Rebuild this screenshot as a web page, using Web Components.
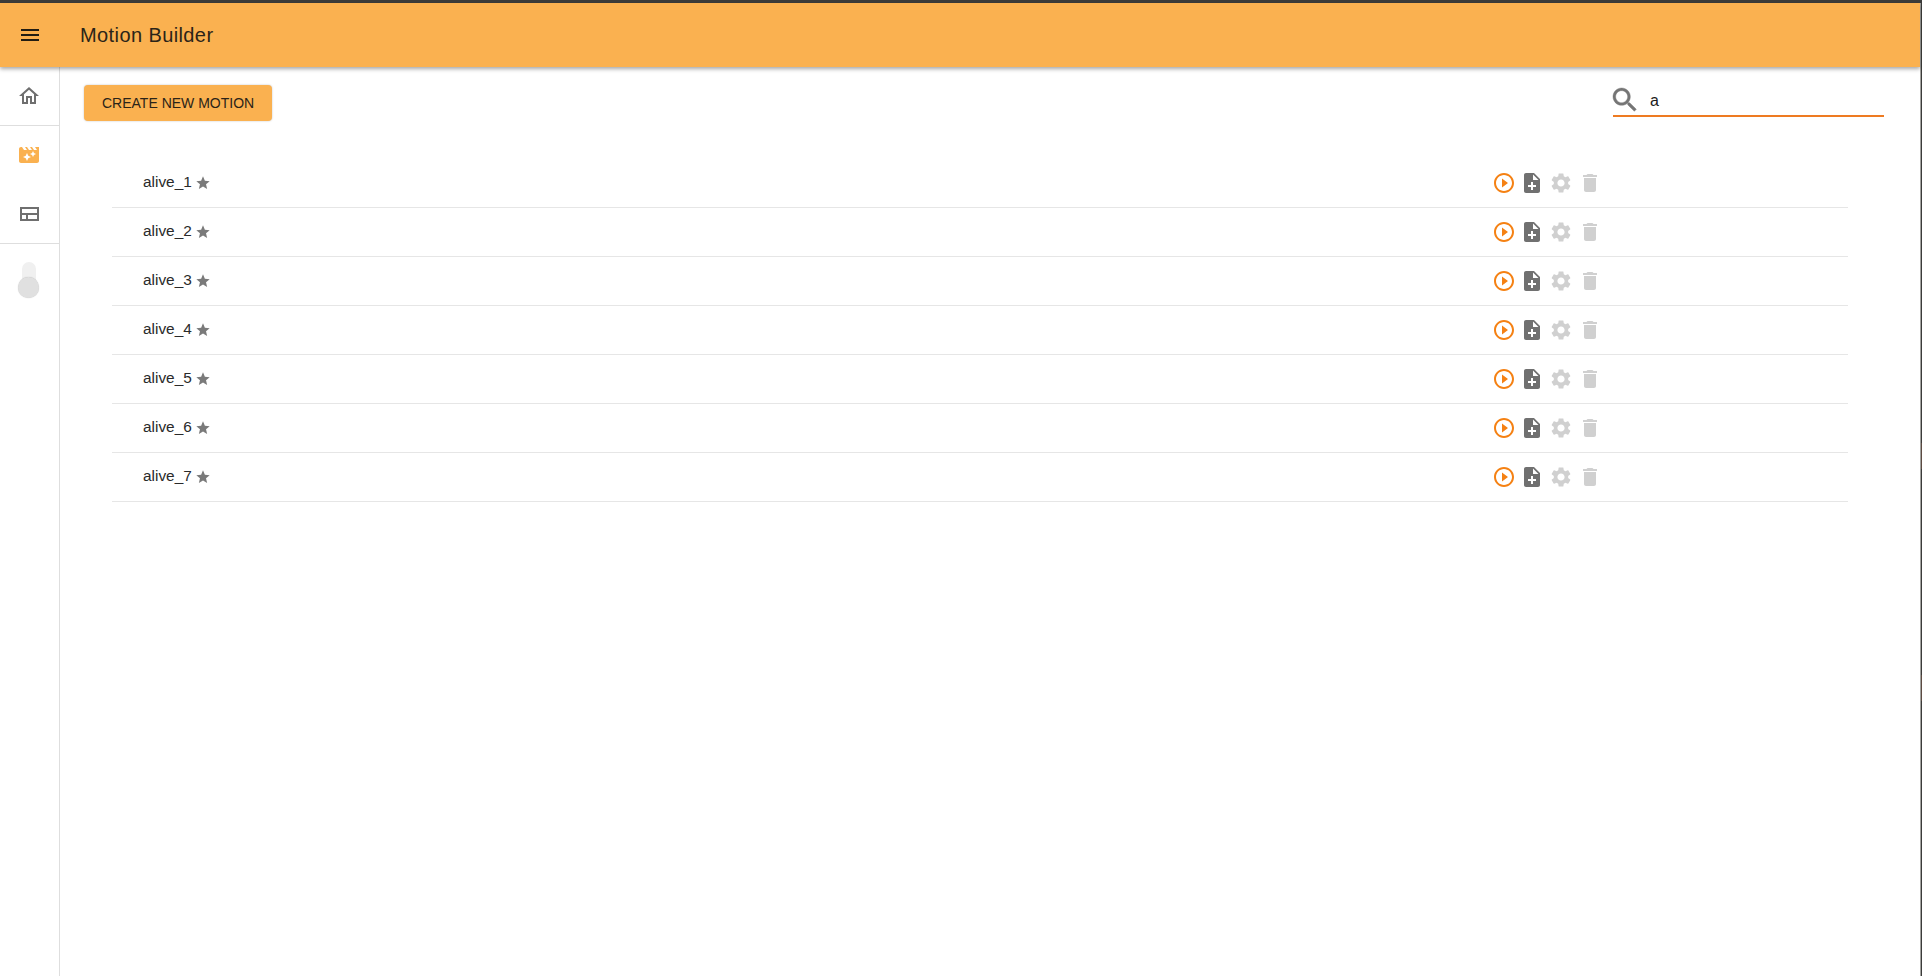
<!DOCTYPE html>
<html lang="en">
<head>
<meta charset="utf-8">
<title>Motion Builder</title>
<style>
  html, body { margin: 0; height: 100%; background: #fff; }
  body { font-family: "Liberation Sans", Arial, sans-serif; overflow: hidden; }
</style>
</head>
<body>
<app-shell>
  <top-bar slot="top" title="Motion Builder"></top-bar>
  <side-rail slot="rail"></side-rail>
  <motion-page>
    <motion-row name="alive_1"></motion-row>
    <motion-row name="alive_2"></motion-row>
    <motion-row name="alive_3"></motion-row>
    <motion-row name="alive_4"></motion-row>
    <motion-row name="alive_5"></motion-row>
    <motion-row name="alive_6"></motion-row>
    <motion-row name="alive_7"></motion-row>
  </motion-page>
</app-shell>

<script>
/** Material icon paths, all on a 24x24 grid. */
const icons = {
  menu: 'M3 18h18v-2H3v2zm0-5h18v-2H3v2zm0-7v2h18V6H3z',
  home: 'M12 5.69l5 4.5V18h-2v-6H9v6H7v-7.81l5-4.5M12 3L2 12h3v8h6v-6h2v6h6v-8h3L12 3z',
  clapper: 'M18 4l2 3h-3l-2-3h-2l2 3h-3l-2-3H8l2 3H7L5 4H4c-1.1 0-1.99.9-1.99 2L2 18c0 1.1.9 2 2 2h16c1.1 0 2-.9 2-2V4h-4zm-6.75 11.25L10 18l-1.25-2.75L6 14l2.75-1.25L10 10l1.25 2.75L14 14l-2.75 1.25zm5.69-3.31L16 14l-.94-2.06L13 11l2.06-.94L16 8l.94 2.06L19 11l-2.06.94z',
  layout: 'M3 6h19v14H3zM5 8v4h15V8zM5 14v4h4v-4zM11 14v4h9v-4z',
  search: 'M15.5 14h-.79l-.28-.27C15.41 12.59 16 11.11 16 9.5 16 5.91 13.09 3 9.5 3S3 5.91 3 9.5 5.91 16 9.5 16c1.61 0 3.09-.59 4.23-1.57l.27.28v.79l5 4.99L20.49 19l-4.99-5zm-6 0C7.01 14 5 11.99 5 9.5S7.01 5 9.5 5 14 7.01 14 9.5 11.99 14 9.5 14z',
  star: 'M12 17.27L18.18 21l-1.64-7.03L22 9.24l-7.19-.61L12 2 9.19 8.63 2 9.24l5.46 4.73L5.82 21z',
  play: 'M10 16.5l6-4.5-6-4.5v9zM12 2C6.48 2 2 6.48 2 12s4.48 10 10 10 10-4.48 10-10S17.52 2 12 2zm0 18c-4.41 0-8-3.59-8-8s3.59-8 8-8 8 3.59 8 8-3.59 8-8 8z',
  noteAdd: 'M14 2H6c-1.1 0-1.99.9-1.99 2L4 20c0 1.1.89 2 1.99 2H18c1.1 0 2-.9 2-2V8l-6-6zm2 14h-3v3h-2v-3H8v-2h3v-3h2v3h3v2zm-3-7V3.5L18.5 9H13z',
  settings: 'M19.14 12.94c.04-.3.06-.61.06-.94 0-.32-.02-.64-.07-.94l2.03-1.58c.18-.14.23-.41.12-.61l-1.92-3.32c-.12-.22-.37-.29-.59-.22l-2.39.96c-.5-.38-1.03-.7-1.62-.94l-.36-2.54c-.04-.24-.24-.41-.48-.41h-3.84c-.24 0-.43.17-.47.41l-.36 2.54c-.59.24-1.13.57-1.62.94l-2.39-.96c-.22-.08-.47 0-.59.22L2.74 8.87c-.12.21-.08.47.12.61l2.03 1.58c-.05.3-.09.63-.09.94s.02.64.07.94l-2.03 1.58c-.18.14-.23.41-.12.61l1.92 3.32c.12.22.37.29.59.22l2.39-.96c.5.38 1.03.7 1.62.94l.36 2.54c.05.24.24.41.48.41h3.84c.24 0 .44-.17.47-.41l.36-2.54c.59-.24 1.13-.56 1.62-.94l2.39.96c.22.08.47 0 .59-.22l1.92-3.32c.12-.22.07-.47-.12-.61l-2.01-1.58zM12 15.6c-1.98 0-3.6-1.62-3.6-3.6s1.62-3.6 3.6-3.6 3.6 1.62 3.6 3.6-1.62 3.6-3.6 3.6z',
  trash: 'M6 19c0 1.1.9 2 2 2h8c1.1 0 2-.9 2-2V7H6v12zM19 4h-3.5l-1-1h-5l-1 1H5v2h14V4z'
}

/**
 * Build the inline svg for a named icon.
 *
 * @param {string} name
 * @param {number} size
 * @param {string} color
 * @param {number} stroke extra weight, in grid units
 */
const icon = (name, size, color, stroke = 0) => `
  <svg width="${size}" height="${size}" viewBox="0 0 24 24" fill="${color}" fill-rule="evenodd" style="display:block"
    ${stroke ? `stroke="${color}" stroke-width="${stroke}"` : ''}>
    <path d="${icons[name]}"/>
  </svg>`

const html = (strings, ...expressions) => {
  const template = document.createElement('template')
  template.innerHTML = strings.reduce((result, str, i) => result + str + (expressions[i] ?? ''), '')
  return template
}

class AppShell extends HTMLElement {
  static template = html`
    <style>
      :host {
        display: grid;
        grid-template-columns: 60px 1fr 2px;
        grid-template-rows: 3px 64px 1fr;
        width: 1922px;
        height: 976px;
      }
      .edge-top { grid-column: 1 / 4; background: #3c3c3a; }
      .top { grid-column: 1 / 3; display: block; }
      .edge-right {
        grid-column: 3;
        grid-row: 2 / 4;
        box-sizing: border-box;
        border-left: 1px solid #a3a3a0;
        background: linear-gradient(#3c3c3a 0 440px, #5d4b42 440px 466px, #3c3c3a 466px 672px, #5d4b42 672px 698px, #3c3c3a 698px);
      }
      main { grid-column: 2; min-width: 0; }
    </style>
    <div class="edge-top"></div>
    <div class="top"><slot name="top"></slot></div>
    <div class="edge-right"></div>
    <div class="rail"><slot name="rail"></slot></div>
    <main><slot></slot></main>
  `

  constructor() {
    super()
    this.attachShadow({ mode: 'open' })
    this.shadowRoot.appendChild(AppShell.template.content.cloneNode(true))
  }
}

class TopBar extends HTMLElement {
  static template = html`
    <style>
      :host {
        display: flex;
        align-items: center;
        position: relative;
        z-index: 2;
        height: 64px;
        background: #fab150;
        color: #2b2418;
        box-shadow: 0 2px 4px rgba(0, 0, 0, .35);
      }
      .menu { width: 60px; display: flex; justify-content: center; }
      h1 {
        margin: 0 0 0 20px;
        font: 400 20px "Liberation Sans", Arial, sans-serif;
        letter-spacing: .4px;
      }
    </style>
    <div class="menu">${icon('menu', 24, '#221d12')}</div>
    <h1></h1>
  `

  constructor() {
    super()
    this.attachShadow({ mode: 'open' })
    this.shadowRoot.appendChild(TopBar.template.content.cloneNode(true))
    this.shadowRoot.querySelector('h1').textContent = this.getAttribute('title')
  }
}

class SideRail extends HTMLElement {
  static template = html`
    <style>
      :host {
        display: block;
        box-sizing: border-box;
        width: 60px;
        height: 909px;
        border-right: 1px solid #dedede;
      }
      .item { height: 58px; padding-right: 1px; display: flex; align-items: center; justify-content: center; }
      .item.last { padding-bottom: 1px; }
      .rule { border-top: 1px solid #dedede; }
      .toggle { position: relative; height: 61px; }
      .track { position: absolute; left: 22px; top: 18px; width: 14px; height: 30px; border-radius: 7px; background: #f0f0f0; }
      .thumb { position: absolute; left: 18px; top: 33px; width: 21px; height: 21px; border-radius: 50%; background: #e0e0e0; box-shadow: 0 0 1px rgba(0, 0, 0, .25); }
    </style>
    <div class="item">${icon('home', 24, '#6f6f6f')}</div>
    <div class="item rule">${icon('clapper', 24, '#fab150')}</div>
    <div class="item last">${icon('layout', 24, '#6f6f6f')}</div>
    <div class="rule toggle"><div class="track"></div><div class="thumb"></div></div>
  `

  constructor() {
    super()
    this.attachShadow({ mode: 'open' })
    this.shadowRoot.appendChild(SideRail.template.content.cloneNode(true))
  }
}

class MotionPage extends HTMLElement {
  static template = html`
    <style>
      :host { display: block; padding: 18px 36px 0 24px; }
      .tools { display: flex; justify-content: space-between; align-items: flex-start; height: 74px; }
      button {
        height: 36px;
        padding: 0 18px;
        border: 0;
        border-radius: 4px;
        background: #fab150;
        color: #2b2418;
        font: 400 14px "Liberation Sans", Arial, sans-serif;
        box-shadow: 0 0 2px rgba(0, 0, 0, .25);
      }
      .search {
        display: flex;
        align-items: center;
        box-sizing: border-box;
        width: 271px;
        height: 32px;
        border-bottom: 2px solid #ee7b22;
      }
      .search svg { margin: -1px 0 0 -4px; }
      input {
        flex: 1;
        min-width: 0;
        margin: 2px 0 0 9px;
        padding: 0;
        border: 0;
        outline: 0;
        background: none;
        color: #1c1c1c;
        font: 400 16px "Liberation Sans", Arial, sans-serif;
      }
      .list { margin: 0 36px 0 28px; }
    </style>
    <div class="tools">
      <button>CREATE NEW MOTION</button>
      <label class="search">${icon('search', 32, '#757575', .3)}<input value="a"></label>
    </div>
    <div class="list"><slot></slot></div>
  `

  constructor() {
    super()
    this.attachShadow({ mode: 'open' })
    this.shadowRoot.appendChild(MotionPage.template.content.cloneNode(true))
  }
}

class MotionRow extends HTMLElement {
  static template = html`
    <style>
      :host {
        display: flex;
        align-items: center;
        box-sizing: border-box;
        height: 49px;
        padding-left: 31px;
        border-bottom: 1px solid #e6e6e6;
        color: #2a2a2a;
        font-size: 15.4px;
      }
      .name { display: flex; align-items: center; gap: 3px; width: 1349px; flex: none; }
      .name span { margin-top: -2px; }
      .actions { display: flex; gap: 4.8px; margin-left: -.5px; }
    </style>
    <div class="name"><span></span>${icon('star', 16, '#7a7a7a')}</div>
    <div class="actions">
      ${icon('play', 24, '#f58113')}
      ${icon('noteAdd', 24, '#707070')}
      ${icon('settings', 24, '#d0d0d0')}
      ${icon('trash', 24, '#d0d0d0')}
    </div>
  `

  constructor() {
    super()
    this.attachShadow({ mode: 'open' })
    this.shadowRoot.appendChild(MotionRow.template.content.cloneNode(true))
    this.shadowRoot.querySelector('span').textContent = this.getAttribute('name')
  }
}

customElements.define('app-shell', AppShell)
customElements.define('top-bar', TopBar)
customElements.define('side-rail', SideRail)
customElements.define('motion-page', MotionPage)
customElements.define('motion-row', MotionRow)
</script>
</body>
</html>
